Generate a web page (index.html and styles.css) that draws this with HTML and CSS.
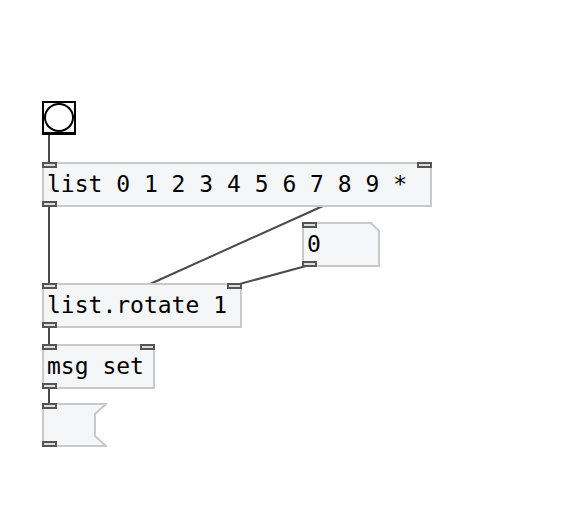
FILE: index.html
```html
<!DOCTYPE html>
<html lang="en">
<head>
  <meta charset="UTF-8">
  <title>list.rotate patch</title>
  <link rel="stylesheet" href="styles.css">
</head>
<body>
  <div class="canvas">
    <!-- patch cords -->
    <svg class="wires" width="573" height="507">
      <line x1="49" y1="134" x2="49" y2="162" />
      <line x1="49" y1="206" x2="49" y2="284" />
      <line x1="323" y1="206" x2="150" y2="284" />
      <line x1="306" y1="266" x2="236" y2="285" />
      <line x1="49" y1="327" x2="49" y2="344" />
      <line x1="49" y1="388" x2="49" y2="403" />
    </svg>

    <div class="bang"><div class="bang-circle"></div></div>

    <div class="obj obj-list">
      <span class="text">list 0 1 2 3 4 5 6 7 8 9 *</span>
      <span class="port in-left"></span>
      <span class="port in-right"></span>
      <span class="port out-left"></span>
    </div>

    <div class="shape obj-num">
      <svg width="78" height="45"><polygon points="1,1 69,1 77,9 77,44 1,44" /></svg>
      <span class="text">0</span>
      <span class="port in-left"></span>
      <span class="port out-left"></span>
    </div>

    <div class="obj obj-rotate">
      <span class="text">list.rotate 1</span>
      <span class="port in-left"></span>
      <span class="port in-right"></span>
      <span class="port out-left"></span>
    </div>

    <div class="obj obj-msgset">
      <span class="text">msg set</span>
      <span class="port in-left"></span>
      <span class="port in-right"></span>
      <span class="port out-left"></span>
    </div>

    <div class="shape obj-msg">
      <svg width="65" height="44"><polygon points="1,1 64,1 53,11 53,33 64,43 1,43" /></svg>
      <span class="port in-left"></span>
      <span class="port out-left"></span>
    </div>
  </div>
</body>
</html>
```

FILE: styles.css
```css
body {
  margin: 0;
  background: #fff;
}

.canvas {
  position: relative;
  width: 573px;
  height: 507px;
  overflow: hidden;
  background: #fff;
  font-family: "DejaVu Sans Mono", "Liberation Mono", monospace;
  font-size: 23px;
  color: #000;
}

.wires {
  position: absolute;
  left: 0;
  top: 0;
}

.wires line {
  stroke: #4a4a4a;
  stroke-width: 2;
}

/* bang */
.bang {
  position: absolute;
  left: 42px;
  top: 101px;
  width: 34px;
  height: 34px;
  box-sizing: border-box;
  border: 2px solid #000;
  border-bottom-width: 3px;
  background: #f8f8f8;
  display: flex;
  align-items: center;
  justify-content: center;
}

.bang-circle {
  width: 30px;
  height: 29px;
  box-sizing: border-box;
  border: 2px solid #000;
  border-radius: 50%;
  background: #fff;
}

/* object boxes */
.obj {
  position: absolute;
  box-sizing: border-box;
  height: 45px;
  padding-left: 3px;
  line-height: 41px;
  white-space: nowrap;
  background: #f5f6f8;
  border: 2px solid #c9c9c9;
}

.obj-list {
  left: 42px;
  top: 162px;
  width: 390px;
}

.obj-rotate {
  left: 42px;
  top: 283px;
  width: 200px;
}

.obj-msgset {
  left: 42px;
  top: 344px;
  width: 113px;
}

/* boxes with an odd outline */
.shape {
  position: absolute;
}

.shape svg {
  position: absolute;
  left: 0;
  top: 0;
}

.shape polygon {
  fill: #f5f6f8;
  stroke: #c9c9c9;
  stroke-width: 2;
}

.shape .text {
  position: absolute;
  left: 5px;
  top: 2px;
  line-height: 41px;
}

.obj-num {
  left: 302px;
  top: 222px;
  width: 78px;
  height: 45px;
}

.obj-msg {
  left: 42px;
  top: 403px;
  width: 65px;
  height: 44px;
}

/* inlets and outlets */
.port {
  position: absolute;
  width: 15px;
  height: 6px;
  box-sizing: border-box;
  border: 2px solid #555;
  background: #ddd;
}

.obj .port.in-left { left: -2px; top: -2px; }
.obj .port.in-right { right: -2px; top: -2px; }
.obj .port.out-left { left: -2px; bottom: -2px; }

.shape .port.in-left { left: 0; top: 0; }
.shape .port.out-left { left: 0; bottom: 0; }
```
